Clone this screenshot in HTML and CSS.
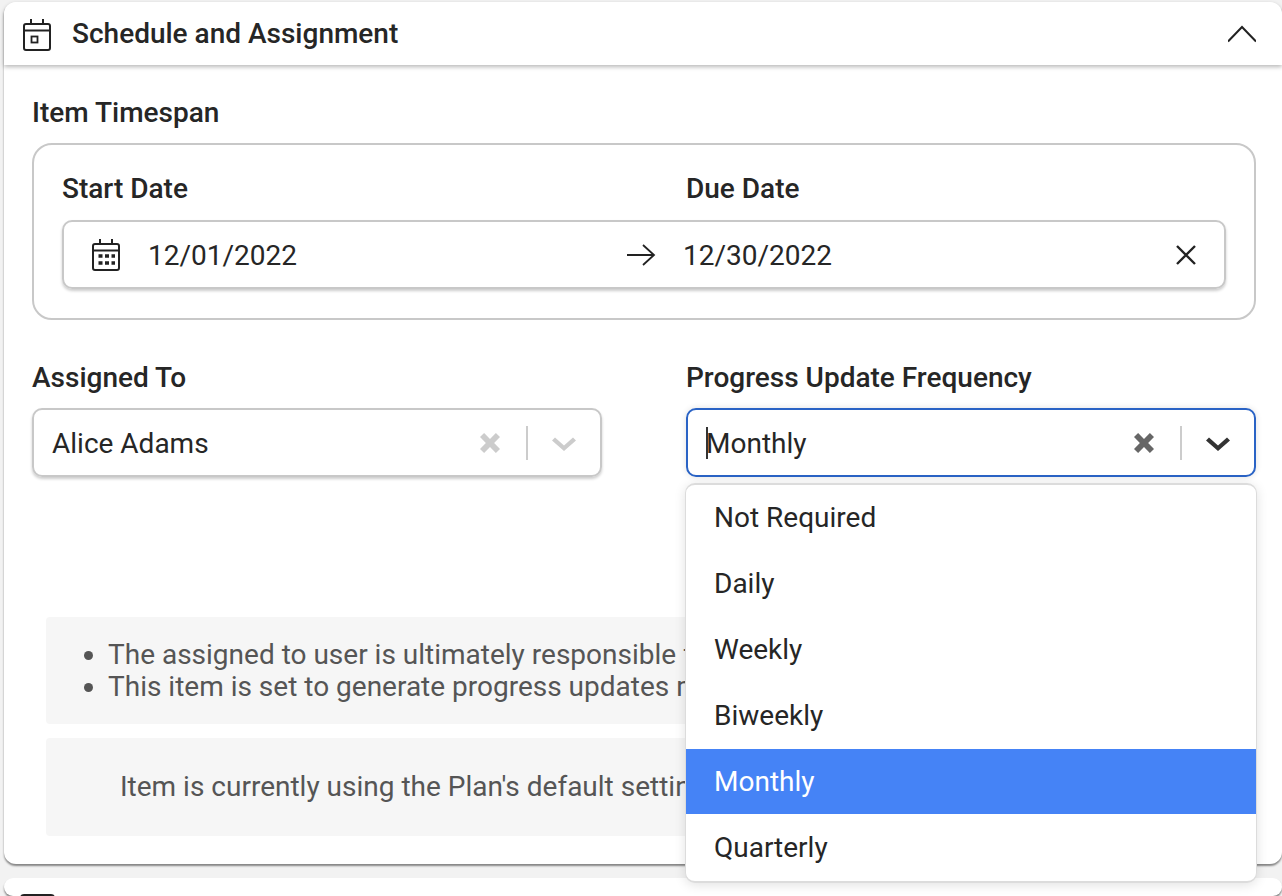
FILE: index.html
```html
<!DOCTYPE html>
<html lang="en">
<head>
<meta charset="utf-8">
<title>Schedule and Assignment</title>
<link rel="stylesheet" href="styles.css">
</head>
<body>
<section class="card">
  <header class="card-head">
    <svg class="head-icon" viewBox="0 0 30 34" fill="none" stroke="#222" stroke-width="2">
      <rect x="2" y="6" width="26" height="26" rx="2"/>
      <path d="M2 12.500H28M9 1V6M21 1V6"/>
      <rect x="9.500" y="18.500" width="6" height="6" stroke-width="1.800"/>
    </svg>
    <h2 class="card-title">Schedule and Assignment</h2>
    <svg class="collapse-icon" viewBox="1 0 28 18" fill="none" stroke="#222" stroke-width="2"><path d="M1 16.500L15 2L29 16.500"/></svg>
  </header>
  <div class="card-body">
    <div class="label">Item Timespan</div>
    <div class="timespan">
      <div class="date-labels">
        <div class="label">Start Date</div>
        <div class="label">Due Date</div>
      </div>
      <div class="date-input">
        <svg class="cal-icon" viewBox="0 0 30 34" fill="none" stroke="#222" stroke-width="2">
          <rect x="2" y="6" width="26" height="26" rx="2"/>
          <path d="M2 12.500H28M9 1V6M21 1V6"/>
          <path stroke-width="3.400" stroke-dasharray="4 2.500" d="M7.500 18H24M7.500 25H24"/>
        </svg>
        <span class="date-start">12/01/2022</span>
        <svg class="arrow-icon" viewBox="0 0 30 24" fill="none" stroke="#222" stroke-width="1.800"><path d="M1 12H28M17 2L28 12L17 22"/></svg>
        <span class="date-end">12/30/2022</span>
        <svg class="clear-icon" viewBox="0 0 20 20" fill="none" stroke="#222" stroke-width="2.400"><path d="M1 1L19 19M19 1L1 19"/></svg>
      </div>
    </div>
    <div class="fields">
      <div class="field">
        <div class="label">Assigned To</div>
        <div class="select">
          <span class="select-value">Alice Adams</span>
          <svg class="sel-x muted" viewBox="1.500 1.500 17 17"><path d="M1.500 5L5 1.500L10 6.500L15 1.500L18.500 5L13.500 10L18.500 15L15 18.500L10 13.500L5 18.500L1.500 15L6.500 10Z"/></svg>
          <i class="sel-sep"></i>
          <svg class="sel-chev muted" viewBox="0 0 24 14"><path d="M3 .500L12 8.500L21 .500L24 3.500L12 14L0 3.500Z"/></svg>
        </div>
      </div>
      <div class="field">
        <div class="label">Progress Update Frequency</div>
        <div class="select select-focus">
          <i class="caret"></i>
          <span class="select-value">Monthly</span>
          <svg class="sel-x grey" viewBox="1.500 1.500 17 17"><path d="M1.500 5L5 1.500L10 6.500L15 1.500L18.500 5L13.500 10L18.500 15L15 18.500L10 13.500L5 18.500L1.500 15L6.500 10Z"/></svg>
          <i class="sel-sep"></i>
          <svg class="sel-chev dark" viewBox="0 0 24 14"><path d="M3 .500L12 8.500L21 .500L24 3.500L12 14L0 3.500Z"/></svg>
        </div>
        <ul class="menu">
          <li class="menu-item">Not Required</li>
          <li class="menu-item">Daily</li>
          <li class="menu-item">Weekly</li>
          <li class="menu-item">Biweekly</li>
          <li class="menu-item menu-active">Monthly</li>
          <li class="menu-item">Quarterly</li>
        </ul>
      </div>
    </div>
    <div class="info info-list">
      <ul>
        <li>The assigned to user is ultimately responsible for the completion of this item.</li>
        <li>This item is set to generate progress updates monthly from the assigned user.</li>
      </ul>
    </div>
    <div class="info info-note">Item is currently using the Plan's default settings for progress updates.</div>
  </div>
</section>
<section class="card card-next">
  <header class="next-head">
    <span class="next-icon"></span>
  </header>
</section>
</body>
</html>
```
FILE: styles.css
```css
html, body { margin: 0; height: 896px; overflow: hidden; }
body {
  background: #f2f2f2;
  padding: 2px 0 0 4px;
  box-sizing: border-box;
  font-family: Roboto, "Liberation Sans", sans-serif;
  color: #262626;
}
.card {
  background: #fff;
  border-radius: 12px;
  box-shadow: 0 2px 2px rgba(0,0,0,.45);
}
.card-head {
  height: 63px;
  display: flex;
  align-items: center;
  padding: 0 26px 0 18px;
  background: #fff;
  border-radius: 12px 12px 0 0;
  box-shadow: 0 2px 4px rgba(0,0,0,.28);
  position: relative;
}
.head-icon { width: 30px; height: 34px; flex: none; margin-top: 2px; }
.card-title { margin: 0 0 0 20px; flex: 1; font-size: 28px; font-weight: 500; line-height: 36px; }
.collapse-icon { width: 28px; height: 18px; flex: none; }
.card-body { padding: 30px 26px 28px 28px; box-sizing: border-box; height: 799px; }
.label { font-size: 28px; font-weight: 500; line-height: 36px; }
.timespan {
  margin-top: 12px;
  height: 177px;
  box-sizing: border-box;
  border: 2px solid #c8c8c8;
  border-radius: 20px;
  padding: 26px 28px 0;
}
.date-labels { display: grid; grid-template-columns: 624px 1fr; }
.date-input {
  margin-top: 13px;
  height: 69px;
  box-sizing: border-box;
  border: 2px solid #c8c8c8;
  border-radius: 10px;
  box-shadow: 0 2px 3px rgba(0,0,0,.2);
  display: flex;
  align-items: center;
  padding: 0 28px 0 27px;
  font-size: 28px;
}
.cal-icon { width: 30px; height: 34px; flex: none; }
.date-start { margin-left: 27px; width: 478px; flex: none; padding-top: 2px; }
.arrow-icon { width: 30px; height: 24px; flex: none; }
.date-end { margin-left: 27px; flex: 1; padding-top: 2px; }
.clear-icon { width: 20px; height: 20px; flex: none; }
.fields { margin-top: 40px; display: grid; grid-template-columns: 570px 570px; column-gap: 84px; }
.field { position: relative; }
.select {
  margin-top: 12px;
  height: 69px;
  box-sizing: border-box;
  border: 2px solid #c8c8c8;
  border-radius: 10px;
  box-shadow: 0 2px 3px rgba(0,0,0,.2);
  display: flex;
  align-items: center;
  padding: 0 24px 0 18px;
  font-size: 28px;
}
.select-focus { border-color: #2a63c5; box-shadow: 0 0 6px rgba(0,0,0,.12); }
.select-value { flex: 1; padding-top: 2px; }
.caret { width: 2px; height: 32px; background: #333; flex: none; margin-right: -2px; }
.sel-x { width: 20px; height: 20px; flex: none; }
.sel-chev { width: 24px; height: 14px; flex: none; margin-top: 2px; }
.sel-sep { width: 2px; height: 34px; background: #ccc; flex: none; margin: 0 24px 0 26px; }
.muted { fill: #ccc; }
.grey { fill: #666; }
.dark { fill: #333; }
.menu {
  position: absolute;
  z-index: 2;
  left: -1px;
  top: 123px;
  width: 570px;
  margin: 0;
  padding: 0;
  list-style: none;
  background: #fff;
  border: 1px solid #dcdcdc;
  border-width: 2px 1px;
  border-radius: 10px;
  overflow: hidden;
  box-shadow: 0 2px 12px rgba(0,0,0,.12);
}
.menu-item { height: 66px; line-height: 66px; padding: 0 28px; font-size: 28px; }
.menu-active { height: 65px; margin-bottom: 1px; background: #4583f6; color: #fff; }
.info { background: #f6f6f6; border-radius: 4px; color: #555; font-size: 28px; margin-left: 14px; margin-right: 14px; }
.info-list { margin-top: 140px; height: 107px; box-sizing: border-box; padding-top: 22px; line-height: 32px; }
.info-list ul { margin: 0; padding-left: 62px; }
.info-note { margin-top: 14px; height: 98px; line-height: 98px; padding-left: 74px; }
.card-next { margin-top: 14px; height: 18px; overflow: hidden; }
.next-head { padding: 16px 0 0 16px; }
.next-icon { display: block; width: 35px; height: 34px; background: #222; border-radius: 4px; }
```
